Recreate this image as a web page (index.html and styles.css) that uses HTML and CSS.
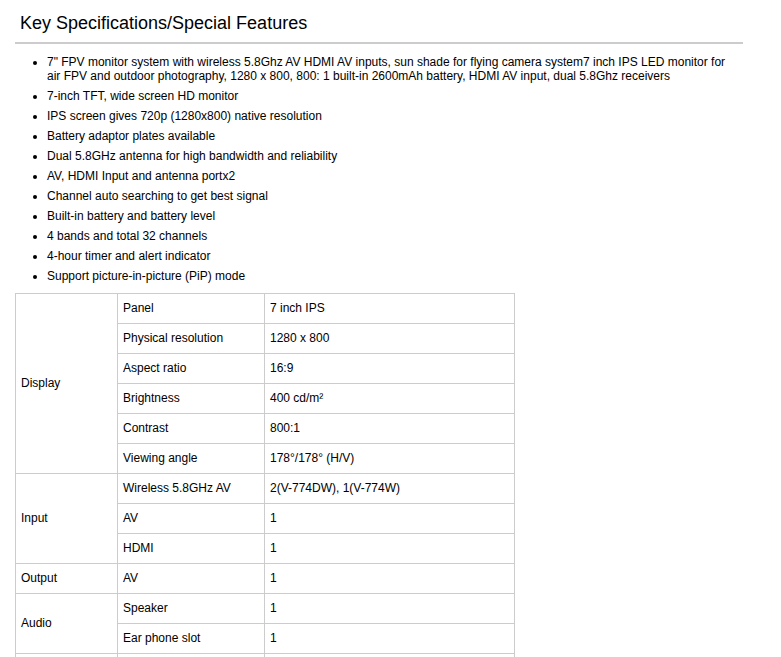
FILE: index.html
```html
<!DOCTYPE html>
<html lang="en">
<head>
<meta charset="utf-8">
<title>Key Specifications</title>
<link rel="stylesheet" href="styles.css">
</head>
<body>
<div class="page">
  <h2 class="title">Key Specifications/Special Features</h2>
  <ul class="features">
    <li>7" FPV monitor system with wireless 5.8Ghz AV HDMI AV inputs, sun shade for flying camera system7 inch IPS LED monitor for air FPV and outdoor photography, 1280 x 800, 800: 1 built-in 2600mAh battery, HDMI AV input, dual 5.8Ghz receivers</li>
    <li>7-inch TFT, wide screen HD monitor</li>
    <li>IPS screen gives 720p (1280x800) native resolution</li>
    <li>Battery adaptor plates available</li>
    <li>Dual 5.8GHz antenna for high bandwidth and reliability</li>
    <li>AV, HDMI Input and antenna portx2</li>
    <li>Channel auto searching to get best signal</li>
    <li>Built-in battery and battery level</li>
    <li>4 bands and total 32 channels</li>
    <li>4-hour timer and alert indicator</li>
    <li>Support picture-in-picture (PiP) mode</li>
  </ul>
  <table class="specs">
    <tr><td class="c1" rowspan="6">Display</td><td class="c2">Panel</td><td class="c3">7 inch IPS</td></tr>
    <tr><td class="c2">Physical resolution</td><td class="c3">1280 x 800</td></tr>
    <tr><td class="c2">Aspect ratio</td><td class="c3">16:9</td></tr>
    <tr><td class="c2">Brightness</td><td class="c3">400 cd/m²</td></tr>
    <tr><td class="c2">Contrast</td><td class="c3">800:1</td></tr>
    <tr><td class="c2">Viewing angle</td><td class="c3">178°/178° (H/V)</td></tr>
    <tr><td class="c1" rowspan="3">Input</td><td class="c2">Wireless 5.8GHz AV</td><td class="c3">2(V-774DW), 1(V-774W)</td></tr>
    <tr><td class="c2">AV</td><td class="c3">1</td></tr>
    <tr><td class="c2">HDMI</td><td class="c3">1</td></tr>
    <tr><td class="c1">Output</td><td class="c2">AV</td><td class="c3">1</td></tr>
    <tr><td class="c1" rowspan="2">Audio</td><td class="c2">Speaker</td><td class="c3">1</td></tr>
    <tr><td class="c2">Ear phone slot</td><td class="c3">1</td></tr>
    <tr class="tail"><td class="c1"></td><td class="c2"></td><td class="c3"></td></tr>
  </table>
</div>
</body>
</html>
```
FILE: styles.css
```css
html, body {
  margin: 0;
  padding: 0;
  background: #ffffff;
}
body {
  font-family: "Liberation Sans", Arial, sans-serif;
  font-size: 12px;
  color: #000;
}
.page {
  width: 728px;
  margin-left: 15px;
}
.title {
  margin: 0;
  padding: 13px 0 9px 5px;
  font-size: 18px;
  font-weight: normal;
  line-height: 20px;
  border-bottom: 2px solid #cccccc;
}
.features {
  margin: 11px 0 0 0;
  padding: 0 10px 0 32px;
  line-height: 14px;
}
.features li {
  margin-bottom: 6px;
}
.specs {
  border-collapse: collapse;
  width: 500px;
  margin-top: 10px;
}
.specs td {
  border: 1px solid #cccccc;
  padding: 7px 5px;
  line-height: 15px;
  text-align: left;
  vertical-align: middle;
}
.specs .tail td {
  height: 15px;
}
.specs .c1 { width: 91px; }
.specs .c2 { width: 136px; }
```
